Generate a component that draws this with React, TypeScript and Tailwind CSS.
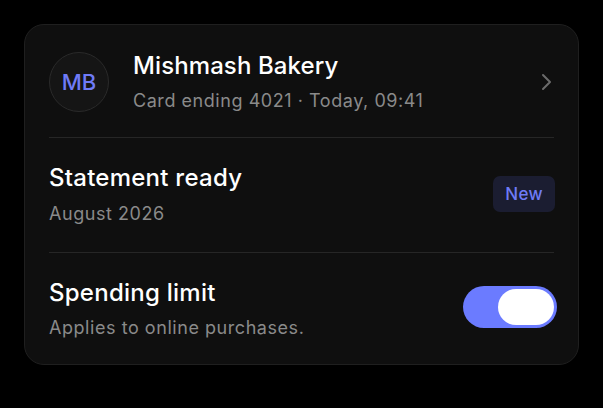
import React, { useState } from 'react';

const Divider = () => <div className="mx-6 h-px bg-[#262626]" />;

export default function App() {
  const [limitOn, setLimitOn] = useState(true);

  return (
    <div
      className="min-h-[408px] w-full bg-black pt-6 pl-6"
      style={{ fontFamily: 'Inter, "Noto Sans", sans-serif' }}
    >
      <div className="w-[555px] rounded-[20px] border border-[#1f1f1f] bg-[#0f0f0f]">
        {/* merchant */}
        <div className="flex items-center px-6 pt-[26px] pb-[24px]">
          <div className="flex h-[60px] w-[60px] shrink-0 items-center justify-center rounded-full border border-[#2a2a2a] bg-[#151515] text-[22px] font-medium text-[#6f7bf7]">
            MB
          </div>
          <div className="ml-6 flex min-w-0 flex-1 flex-col gap-[8px]">
            <div className="text-[24px] leading-[30px] font-medium tracking-[0.1px] text-white">Mishmash Bakery</div>
            <div className="text-[18px] leading-[24px] tracking-[0.55px] text-[#8a8a8a]">
              Card ending 4021 · Today, 09:41
            </div>
          </div>
          <svg width="14" height="20" viewBox="0 0 14 20" className="mr-[1px]" fill="none">
            <path d="M4 3l7 7-7 7" stroke="#6b6b6b" strokeWidth="2" strokeLinecap="round" strokeLinejoin="round" />
          </svg>
        </div>

        <Divider />

        {/* statement */}
        <div className="flex items-center justify-between px-6 pt-[25px] pb-[26px]">
          <div className="flex flex-col gap-[9px]">
            <div className="text-[24px] leading-[30px] font-medium tracking-[0.25px] text-white">Statement ready</div>
            <div className="text-[18px] leading-[24px] tracking-[0.55px] text-[#8a8a8a]">August 2026</div>
          </div>
          <span className="mt-[-2px] mr-[-1px] rounded-[7px] bg-[#1b1d31] px-3 py-[6px] text-[17px] leading-[24px] font-medium tracking-[0.4px] text-[#6f7bf7]">
            New
          </span>
        </div>

        <Divider />

        {/* limit */}
        <div className="flex items-center justify-between px-6 pt-[25px] pb-[24px]">
          <div className="flex flex-col gap-[8px]">
            <div className="text-[24px] leading-[30px] font-medium tracking-[0.25px] text-white">Spending limit</div>
            <div className="text-[18px] leading-[24px] tracking-[0.55px] text-[#8a8a8a]">Applies to online purchases.</div>
          </div>
          <button
            type="button"
            onClick={() => setLimitOn((v) => !v)}
            className={
              limitOn
                ? 'mr-[-3px] mt-[-4px] flex h-[42px] w-[94px] items-center justify-end rounded-full bg-[#6b7bff] px-[3px]'
                : 'mr-[-3px] mt-[-4px] flex h-[42px] w-[94px] items-center justify-start rounded-full bg-[#3a3a3c] px-[3px]'
            }
          >
            <span className="h-[36px] w-[56px] rounded-full bg-white" />
          </button>
        </div>
      </div>
    </div>
  );
}
